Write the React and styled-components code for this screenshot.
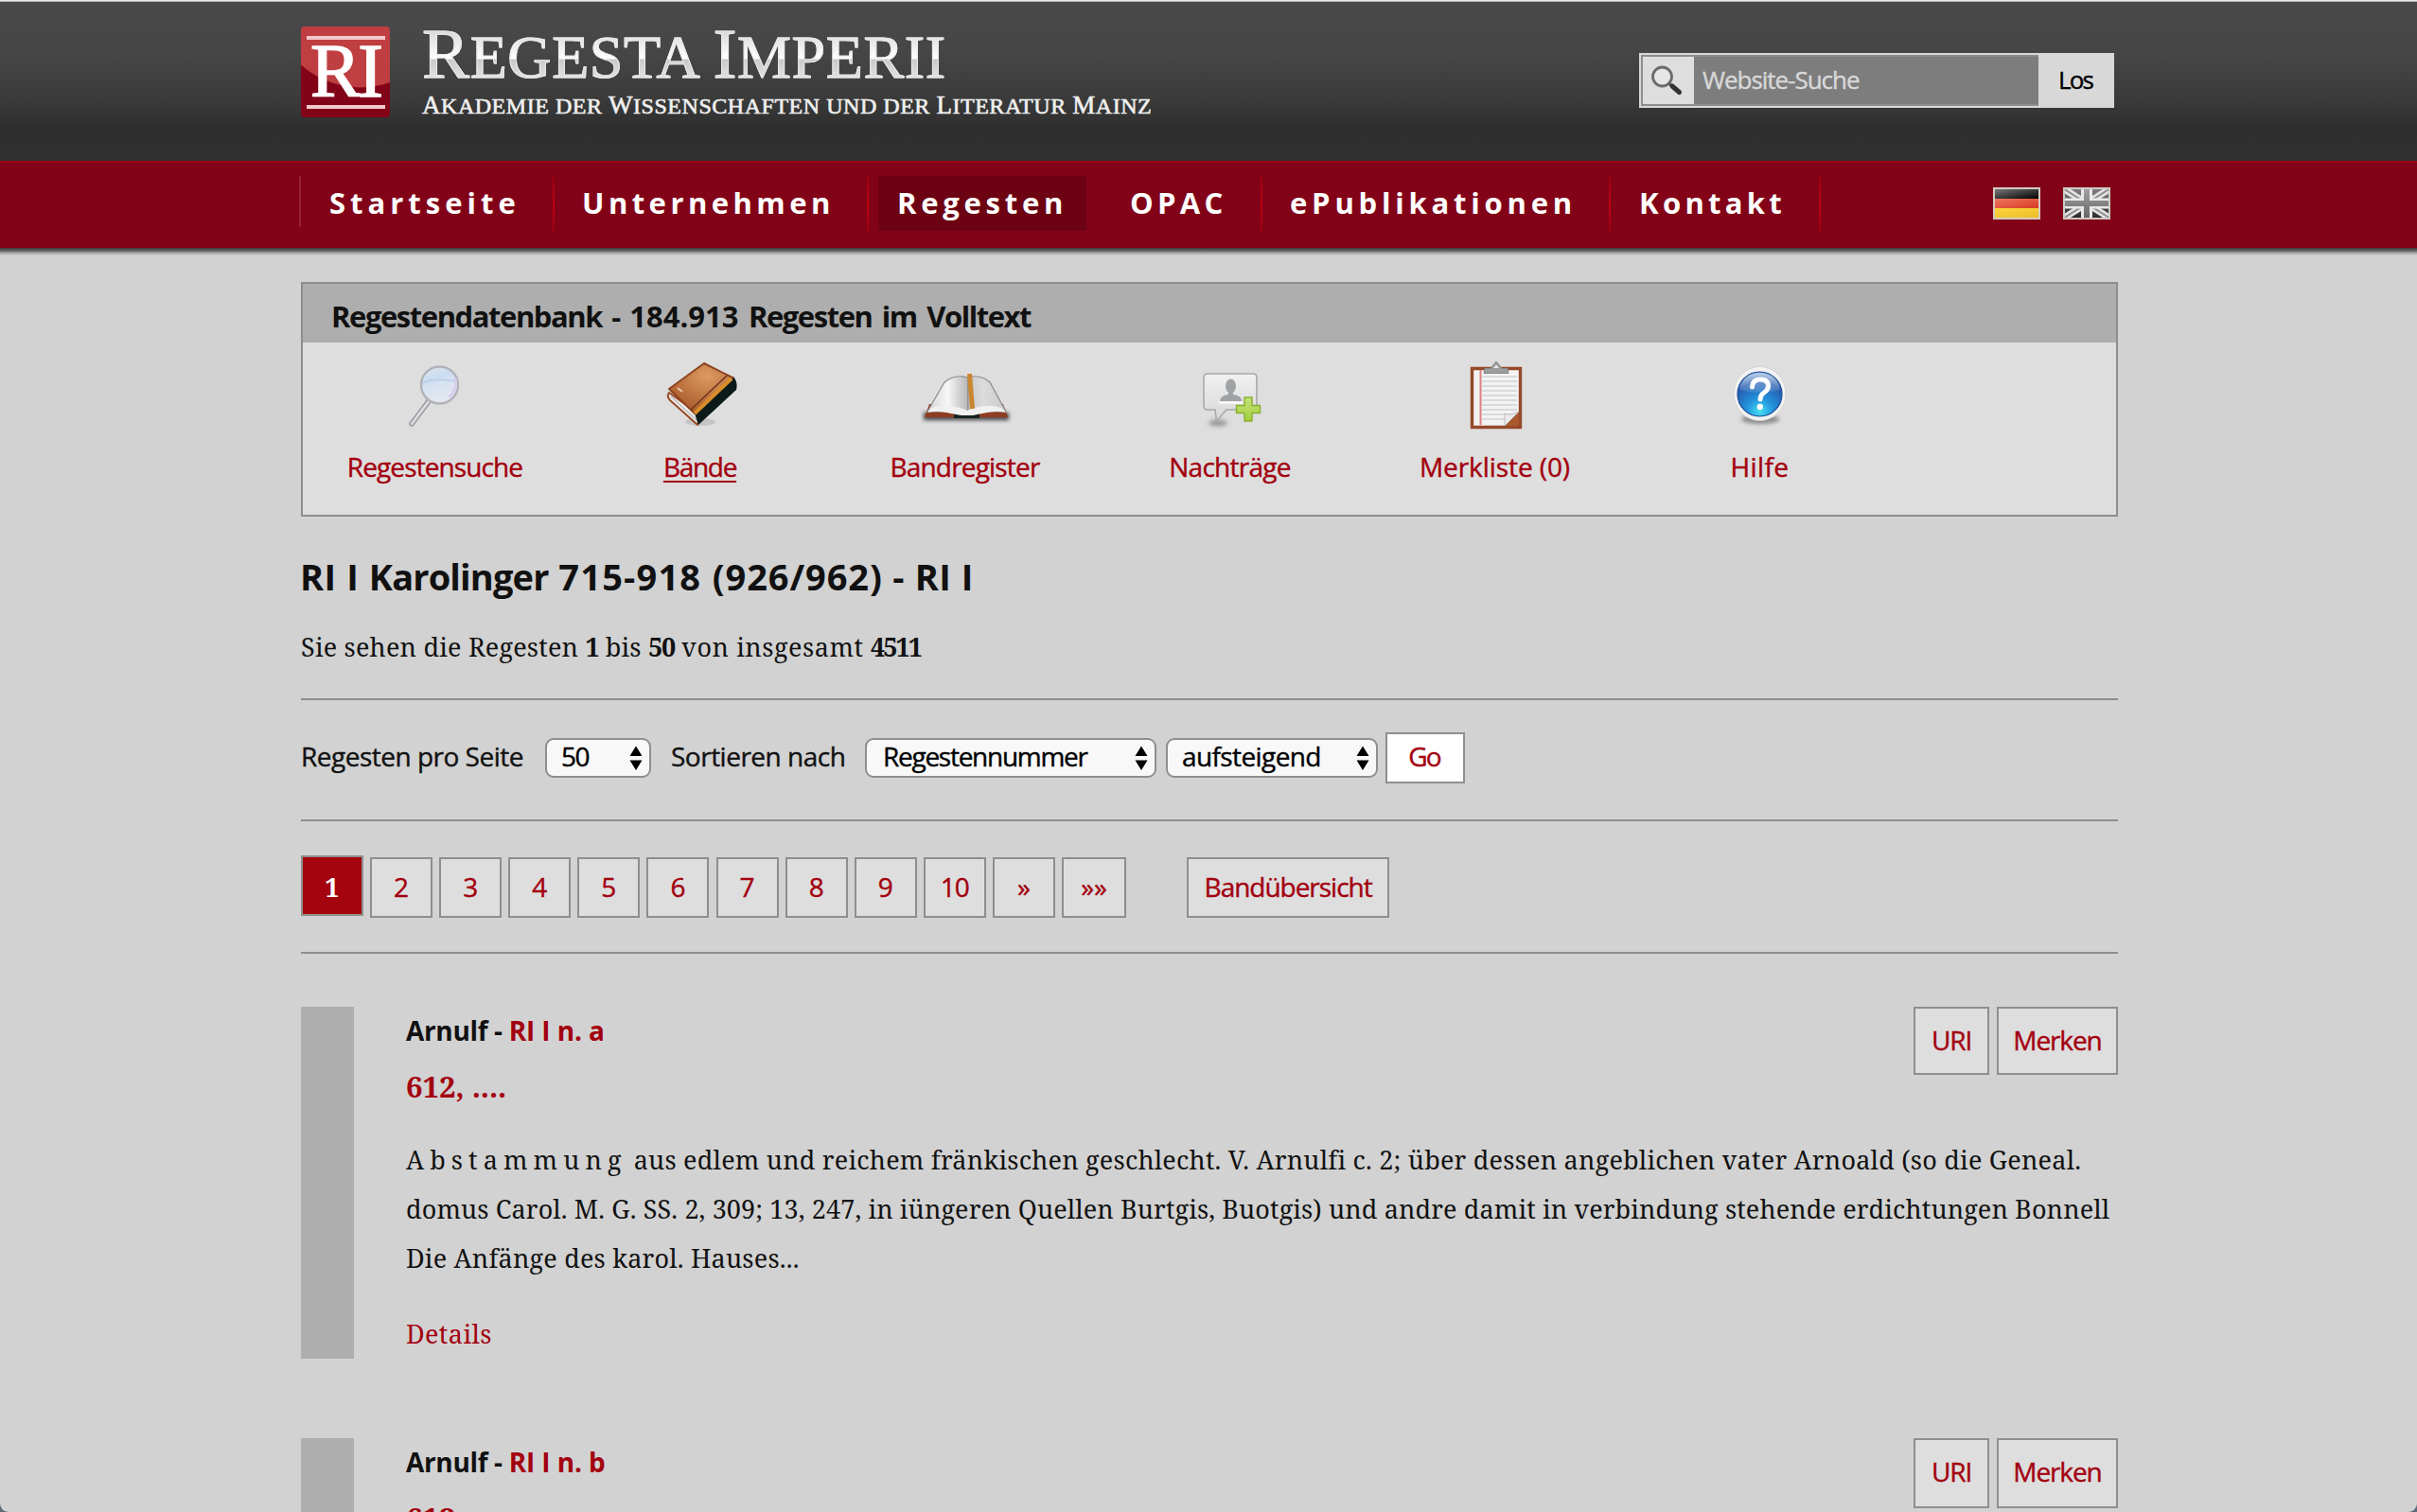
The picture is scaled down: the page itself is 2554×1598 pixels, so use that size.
import React from 'react';
import styled, { createGlobalStyle, css } from 'styled-components';

const sans = "'Open Sans', 'Noto Sans', sans-serif";
const slab = "'Noto Serif', 'DejaVu Serif Condensed', 'DejaVu Serif', serif";
const roman = "'Liberation Serif', 'Times New Roman', serif";

const c = {
  page: '#d2d2d2',
  ink: '#111',
  red: '#a3000f',
  navRed: '#820318',
  line: '#8e8e8e',
  bar: '#aeaeae',
  light: '#dedede',
};

const Global = createGlobalStyle`
  * { box-sizing: border-box; }
  html, body { margin: 0; padding: 0; background: #5f6b78; }
  body { font-family: ${sans}; color: ${c.ink}; }
  h1, h2, h3, p { margin: 0; }
  a { color: inherit; text-decoration: none; }
  svg { display: block; flex: none; }
`;

const sturdy = css`
  -webkit-text-stroke: 0.4px currentColor;
`;

const Page = styled.div`
  width: 2554px;
  height: 1598px;
  overflow: hidden;
  display: flex;
  flex-direction: column;
  background: ${c.page};
  border-radius: 0 0 9px 9px;
  white-space: nowrap;
`;

const Tracked = styled.span`
  letter-spacing: ${p => p.$ls}px;
`;

/* ---------- header ---------- */
const TopEdge = styled.div`
  height: 2px;
  flex: none;
  background: linear-gradient(#e9ecec 50%, #b3b7b7 50%);
`;
const Header = styled.header`
  height: 168px;
  flex: none;
  padding: 0 320px 0 318px;
  display: flex;
  align-items: flex-start;
  background: linear-gradient(#4a4949, #474646 32%, #3a3a3a 62%, #2e2e2e 80%, #303030);
`;
const Emblem = styled.div`
  width: 94px;
  height: 96px;
  margin-top: 26px;
  border-radius: 4px;
  display: flex;
  flex-direction: column;
  align-items: center;
  padding: 10px 0 0;
  background: radial-gradient(circle 96px at 63px -31px, #bf3e41 98.5%, ${c.navRed} 100%);
`;
const EmblemBar = styled.div`
  width: 83px;
  height: 4px;
  flex: none;
  background: #f1c9cb;
`;
const EmblemText = styled.div`
  height: 69px;
  font: 400 80px/67px ${roman};
  letter-spacing: -3px;
  color: #fff;
  -webkit-text-stroke: 1.5px #fff;
`;
const Brand = styled.div`
  margin: 25px 0 0 34px;
  font-family: ${roman};
  text-transform: uppercase;
`;
const BrandTitle = styled.div`
  height: 60px;
  font-size: 64px;
  line-height: 60px;
  letter-spacing: 0.6px;
  color: transparent;
  background: linear-gradient(#d8d8d8 8%, #ffffff 58%, #c9c9c9 60%, #e2e2e2 92%);
  -webkit-background-clip: text;
  background-clip: text;
  -webkit-text-stroke: 1px #e9e9e9;
`;
const Cap = styled.span`
  font-size: ${p => p.$size}px;
`;
const BrandSub = styled.div`
  margin-top: 9px;
  height: 30px;
  line-height: 30px;
  font-size: 24px;
  letter-spacing: 0.53px;
  color: #f0f0f0;
  -webkit-text-stroke: 0.6px #f0f0f0;
`;
const Search = styled.form`
  margin: 54px 0 0 auto;
  width: 502px;
  height: 58px;
  display: flex;
  padding: 2px 0 2px 2px;
  background: #d8d8d8;
  font-size: 26px;
  ${sturdy}
`;
const SearchField = styled.div`
  width: 420px;
  display: flex;
  border: 2px solid ${c.line};
  border-right: 0;
  background: #7d7d7d;
  color: #d8d8d8;
  line-height: 48px;
`;
const SearchIcon = styled.div`
  width: 54px;
  background: ${c.light};
`;
const Placeholder = styled.span`
  padding-left: 9px;
  letter-spacing: -1.03px;
`;
const SearchButton = styled.div`
  flex: 1;
  padding-left: 21px;
  line-height: 52px;
  letter-spacing: -1.8px;
  color: #000;
`;

/* ---------- navigation ---------- */
const Nav = styled.nav`
  height: 92px;
  flex: none;
  padding: 14px 324px 0 316px;
  display: flex;
  align-items: flex-start;
  border-top: 2px solid #a00610;
  background: ${c.navRed};
`;
const NavLine = styled.i`
  width: 2px;
  height: ${p => (p.$first ? 54 : 60)}px;
  background: ${p => (p.$first ? '#97222c' : 'linear-gradient(#9a0011, #c00010 50%, #9a0011)')};
`;
const NavItem = styled.a`
  width: ${p => p.$w}px;
  height: 58px;
  padding-left: ${p => p.$pad}px;
  font-size: 31px;
  font-weight: 700;
  line-height: 56px;
  letter-spacing: ${p => p.$ls}px;
  color: #fff;
  ${p => p.$active && css`
    margin-left: 10px;
    background: #6d0213;
  `}
`;
const Flags = styled.div`
  margin: 12px 0 0 auto;
  display: flex;
  gap: 24px;
`;
const NavShadow = styled.div`
  height: 8px;
  flex: none;
  background: linear-gradient(#363636, #6a6a6a 40%, #b4b4b4 75%, #cfcfcf);
`;

/* ---------- content ---------- */
const Content = styled.main`
  width: 1920px;
  margin: 28px 0 0 318px;
  display: flex;
  flex-direction: column;
`;
const Panel = styled.section`
  height: 248px;
  border: 2px solid ${c.line};
  background: ${c.light};
`;
const PanelTitle = styled.h2`
  height: 62px;
  padding: 6px 0 0 30px;
  background: ${c.bar};
  font-size: 31px;
  font-weight: 700;
  line-height: 56px;
  letter-spacing: -1.45px;
  word-spacing: 3.8px;
`;
const Tools = styled.div`
  display: flex;
`;
const Tool = styled.a`
  width: 280px;
  display: flex;
  flex-direction: column;
  align-items: center;
  gap: 11px;
  color: ${c.red};
  font-size: 28px;
  line-height: 40px;
  ${sturdy}
`;
const ToolLabel = styled.span`
  letter-spacing: ${p => p.$ls}px;
  margin-right: 1px;
  ${p => p.$active && css`
    text-decoration: underline;
    text-decoration-thickness: 2px;
    text-underline-offset: 4px;
  `}
`;
const Heading = styled.h1`
  margin: 38px 0 0 -1px;
  font-size: 38px;
  font-weight: 700;
  line-height: 50px;
  letter-spacing: 0.4px;
  word-spacing: 0.4px;
`;
const Summary = styled.p`
  margin-top: 30px;
  font: 400 27px/40px ${slab};
  letter-spacing: 0.2px;
`;
const Rule = styled.hr`
  width: 100%;
  height: 2px;
  border: 0;
  margin: ${p => p.$top}px 0 ${p => p.$bottom}px;
  background: ${c.line};
`;
const Controls = styled.div`
  height: 54px;
  display: flex;
  align-items: center;
  font-size: 28px;
  ${sturdy}
`;
const Label = styled.label`
  width: ${p => p.$w}px;
  padding-bottom: 4px;
  margin-left: ${p => p.$ml || 0}px;
  letter-spacing: -0.5px;
`;
const SelectBox = styled.div`
  width: ${p => p.$w}px;
  height: 42px;
  margin-left: ${p => p.$ml || 0}px;
  padding: 0 7px 0 ${p => p.$pad}px;
  display: flex;
  justify-content: space-between;
  border: 2px solid ${c.line};
  border-radius: 9px;
  background: #f8f8f8;
  color: #000;
  line-height: 34px;
  letter-spacing: ${p => p.$ls}px;
`;
const Go = styled.button`
  width: 84px;
  height: 54px;
  margin-left: 8px;
  padding: 0 2px 0 0;
  border: 2px solid ${c.line};
  background: #fff;
  color: ${c.red};
  font: 400 28px/46px ${sans};
  letter-spacing: -1.8px;
  display: flex;
  justify-content: center;
  ${sturdy}
`;
const Pager = styled.div`
  height: 66px;
  display: flex;
  align-items: flex-start;
  gap: 7.1px;
`;
const PageBox = styled.a`
  width: ${p => p.$w || 66}px;
  height: 64px;
  margin: 2px 0 0 ${p => p.$ml || 0}px;
  border: 2px solid ${c.line};
  background: ${c.light};
  color: ${c.red};
  font-size: 28px;
  line-height: 58px;
  text-align: center;
  letter-spacing: ${p => p.$ls || 0}px;
  ${sturdy}
  ${p => p.$active && css`
    margin-top: 0;
    background: #a3040e;
    color: #fff;
    font: 700 27px/64px ${slab};
    -webkit-text-stroke: 0;
  `}
`;
const Entries = styled.div`
  display: flex;
  flex-direction: column;
  gap: 84px;
`;
const Entry = styled.article`
  height: 372px;
  display: flex;
  gap: 55px;
`;
const EntryBar = styled.div`
  width: 56px;
  background: ${c.bar};
`;
const EntryBody = styled.div`
  flex: 1;
`;
const EntryTop = styled.div`
  height: 106px;
  display: flex;
  justify-content: space-between;
  align-items: flex-start;
`;
const EntryHead = styled.h3`
  margin-top: 5px;
  font-size: 28px;
  font-weight: 700;
  line-height: 40px;
  letter-spacing: -0.35px;
  a { color: ${c.red}; letter-spacing: -0.1px; }
`;
const EntryDate = styled.h3`
  margin: 17px 0 0;
  font: 700 31px/44px ${slab};
  color: ${c.red};
`;
const Actions = styled.div`
  display: flex;
  gap: 8px;
`;
const Action = styled.a`
  width: ${p => p.$w}px;
  height: ${p => p.$h || 72}px;
  border: 2px solid ${c.line};
  background: ${c.light};
  color: ${c.red};
  font-size: 28px;
  line-height: 66px;
  text-align: center;
  letter-spacing: -1.1px;
  ${sturdy}
`;
const Abstract = styled.p`
  margin-top: 30px;
  font: 400 27px/52px ${slab};
`;
const Details = styled.a`
  display: block;
  margin-top: 28px;
  color: ${c.red};
  font: 400 27px/52px ${slab};
  letter-spacing: 0.4px;
`;

/* ---------- drawings ---------- */
const Magnifier = () => (
  <svg width="54" height="50" viewBox="0 0 54 50" fill="none">
    <circle cx="20.5" cy="21" r="10" fill="#e6e6e6" stroke="#6b6b6b" strokeWidth="2.8" />
    <path d="M28 28.5l3 3" stroke="#555" strokeWidth="3" />
    <path d="M31 31l7.5 6.5" stroke="#333" strokeWidth="5" strokeLinecap="round" />
  </svg>
);

const FlagDe = () => (
  <svg width="50" height="34" viewBox="0 0 50 34">
    <defs>
      <linearGradient id="deK" x1="0" y1="0" x2="1" y2="1"><stop offset="0" stopColor="#777" /><stop offset="1" stopColor="#000" /></linearGradient>
      <linearGradient id="deR" x1="0" y1="0" x2="1" y2="1"><stop offset="0" stopColor="#ee7560" /><stop offset="1" stopColor="#d83a22" /></linearGradient>
      <linearGradient id="deG" x1="0" y1="0" x2="1" y2="1"><stop offset="0" stopColor="#fbd53c" /><stop offset="1" stopColor="#edbe26" /></linearGradient>
    </defs>
    <path fill="#d3cbc4" d="M0 0h50v34H0z" />
    <path fill="url(#deK)" d="M2 2h46v10H2z" />
    <path fill="url(#deR)" d="M2 12h46v10H2z" />
    <path fill="url(#deG)" d="M2 22h46v10H2z" />
  </svg>
);

const FlagUk = () => (
  <svg width="50" height="34" viewBox="0 0 50 34">
    <defs>
      <clipPath id="ukClip"><path d="M2 2h46v30H2z" /></clipPath>
      <linearGradient id="ukB" x1="0" y1="0" x2="0" y2="1"><stop offset="0" stopColor="#808080" /><stop offset="1" stopColor="#2c2c2c" /></linearGradient>
      <linearGradient id="ukC" x1="0" y1="0" x2="0" y2="1"><stop offset="0" stopColor="#a2a2a2" /><stop offset="1" stopColor="#666" /></linearGradient>
    </defs>
    <path fill="#cfcac6" d="M0 0h50v34H0z" />
    <g clipPath="url(#ukClip)">
      <path fill="url(#ukB)" d="M2 2h46v30H2z" />
      <path stroke="#e4e4e4" strokeWidth="7" d="M0 1l50 32M50 1L0 33" />
      <path stroke="#909090" strokeWidth="2" d="M0 1l50 32M50 1L0 33" />
      <path fill="#e8e8e8" d="M19 2h12v30H19zM2 11.500h46v11H2z" />
      <path fill="url(#ukC)" d="M22 2h6v30h-6zM2 14h46v6H2z" />
    </g>
  </svg>
);

const IconSearch = () => (
  <svg width="120" height="100" viewBox="0 0 120 100">
    <defs>
      <linearGradient id="lens" x1="0" y1="0" x2="0.4" y2="1">
        <stop offset="0" stopColor="#e3e9f0" /><stop offset="0.4" stopColor="#c9dcf0" /><stop offset="0.5" stopColor="#d3e1f1" /><stop offset="1" stopColor="#e6e8ee" />
      </linearGradient>
    </defs>
    <path d="M53 62L35 86" stroke="#9a9ca0" strokeWidth="5.5" strokeLinecap="round" />
    <path d="M53 62L35 86" stroke="#dfe1e4" strokeWidth="2.4" strokeLinecap="round" />
    <circle cx="64.5" cy="45" r="19.5" fill="url(#lens)" stroke="#b0b3b9" strokeWidth="2.4" />
    <path d="M47 42q17-5 35-1" stroke="#b7cde6" strokeWidth="1.4" fill="none" />
    <path d="M81 38q3 12-7 20" stroke="#d6cfec" strokeWidth="3" fill="none" />
  </svg>
);

const IconBook = () => (
  <svg width="120" height="100" viewBox="0 0 120 100">
    <defs>
      <radialGradient id="cover" cx="0.6" cy="0.25" r="0.75"><stop offset="0" stopColor="#dc9a60" /><stop offset="1" stopColor="#a9592b" /></radialGradient>
    </defs>
    <ellipse cx="60" cy="84" rx="16" ry="4" fill="#bbb" opacity="0.7" />
    <path d="M27 53q-3 4 1 8l29 26 3-10z" fill="#ececec" stroke="#9a4a25" strokeWidth="2" strokeLinejoin="round" />
    <path d="M29 57l28 26" stroke="#bdbdbd" strokeWidth="1.5" />
    <path d="M95 36q5 6 3 14L58 87q-2-6-4-12z" fill="#0c1a18" />
    <path d="M64 22l30 15-40 38-27-26z" fill="url(#cover)" stroke="#8e4321" strokeWidth="2" strokeLinejoin="round" />
    <path d="M88 35L50 71" stroke="#6d3318" strokeWidth="1.5" />
    <path d="M93 38L54 75" stroke="#d88d2a" strokeWidth="4" />
    <path d="M36 48l5 4" stroke="#e9c7a8" strokeWidth="2" />
  </svg>
);

const IconOpenBook = () => (
  <svg width="120" height="100" viewBox="0 0 120 100">
    <defs>
      <linearGradient id="pgL" x1="0" y1="0" x2="1" y2="0"><stop offset="0" stopColor="#d5d5d5" /><stop offset="0.5" stopColor="#f6f6f6" /><stop offset="1" stopColor="#b5b5b5" /></linearGradient>
      <linearGradient id="pgR" x1="0" y1="0" x2="1" y2="0"><stop offset="0" stopColor="#c6c6c6" /><stop offset="0.4" stopColor="#dcdcdc" /><stop offset="1" stopColor="#c9c9c9" /></linearGradient>
      <filter id="soft" x="-20%" y="-100%" width="140%" height="300%"><feGaussianBlur stdDeviation="2" /></filter>
    </defs>
    <path d="M16 74h90v8H16z" fill="#444" filter="url(#soft)" />
    <path d="M17 79l5-14h78l5 14z" fill="#8f3c20" />
    <path d="M48 75h27v5H48z" fill="#16221f" />
    <path d="M20 73L38 42q11-9 25-5v36z" fill="url(#pgL)" stroke="#8d8d8d" strokeWidth="1.200" />
    <path d="M103 73L86 42q-11-9-23-5v36z" fill="url(#pgR)" stroke="#8d8d8d" strokeWidth="1.200" />
    <path d="M20 74q4-7 16-7 16 0 26 5 10-5 25-5 12 0 16 7-9-2-20 0-11 2-15 3H56q-6-1-16-3t-20 0z" fill="#f1f1f1" />
    <path d="M64.500 33l3 37" stroke="#c9862f" strokeWidth="5" />
  </svg>
);

const IconNote = () => (
  <svg width="120" height="100" viewBox="0 0 120 100">
    <defs>
      <linearGradient id="bub" x1="0" y1="0" x2="0" y2="1"><stop offset="0" stopColor="#f1f1f1" /><stop offset="1" stopColor="#d6d7d8" /></linearGradient>
      <linearGradient id="pls" x1="0" y1="0" x2="0" y2="1"><stop offset="0" stopColor="#c5e07a" /><stop offset="1" stopColor="#a4cf3c" /></linearGradient>
      <filter id="soft2" x="-50%" y="-100%" width="200%" height="300%"><feGaussianBlur stdDeviation="2" /></filter>
    </defs>
    <ellipse cx="47" cy="85" rx="10" ry="3.500" fill="#999" filter="url(#soft2)" />
    <path d="M36 33h48q4 0 4 4v30q0 4-4 4H56L45.500 83 44 71h-8q-4 0-4-4V37q0-4 4-4z" fill="url(#bub)" stroke="#a9a9a9" strokeWidth="1.6" />
    <ellipse cx="60.500" cy="46" rx="5.500" ry="7.500" fill="#a0a3a6" />
    <path d="M58 50h5v5q9 1 9.500 7H49q.5-6 9-7z" fill="#a0a3a6" />
    <path d="M48 63.500h25" stroke="#fff" strokeWidth="2" />
    <path d="M75 58h8v8.500h8.500v8H83V83h-8v-8.500h-8.500v-8H75z" fill="url(#pls)" stroke="#86b02c" strokeWidth="1.400" strokeLinejoin="round" />
  </svg>
);

const IconClipboard = () => (
  <svg width="120" height="100" viewBox="0 0 120 100">
    <path d="M35.500 27.500h51v62h-51z" fill="#f3f3f3" stroke="#96492a" strokeWidth="3.400" />
    {[36, 41, 46, 51, 56, 61, 66, 71, 76, 81].map(y => (
      <path key={y} d={`M46 ${y}h37`} stroke="#d9dadb" strokeWidth="2.200" />
    ))}
    <path d="M44.500 29v58" stroke="#dd7f80" strokeWidth="2" />
    <path d="M85 73v15H70z" fill="#a9592b" />
    <path d="M70 88V75q5 3 15-2z" fill="#ebebeb" stroke="#bcbcbc" strokeWidth="1" />
    <path d="M48 32.500l1-5h6l6-7.500 6 7.500h6l1 5z" fill="#9b9d9f" stroke="#85878a" strokeWidth="1" />
    <path d="M58 27l3-3.500 3 3.500z" fill="#e8e8e8" />
  </svg>
);

const IconHelp = () => (
  <svg width="120" height="100" viewBox="0 0 120 100">
    <defs>
      <radialGradient id="orb" cx="0.5" cy="0.9" r="0.85"><stop offset="0" stopColor="#45e0f2" /><stop offset="0.35" stopColor="#2394dc" /><stop offset="0.8" stopColor="#2459ad" /><stop offset="1" stopColor="#5c8dcb" /></radialGradient>
      <linearGradient id="gloss" x1="0" y1="0" x2="0" y2="1"><stop offset="0" stopColor="#fff" stopOpacity="0.55" /><stop offset="1" stopColor="#fff" stopOpacity="0.1" /></linearGradient>
      <filter id="soft3" x="-50%" y="-100%" width="200%" height="300%"><feGaussianBlur stdDeviation="2" /></filter>
    </defs>
    <ellipse cx="60" cy="81" rx="20" ry="5" fill="#888" filter="url(#soft3)" />
    <ellipse cx="59.500" cy="54" rx="27.500" ry="28.500" fill="#f3f3f3" stroke="#d6d6d6" strokeWidth="1" />
    <circle cx="59.500" cy="54.500" r="23.500" fill="url(#orb)" stroke="#1e4c98" strokeWidth="1.200" />
    <path d="M38 50q4-18 21.500-18T81 50q-20 6-43 0z" fill="url(#gloss)" />
    <path d="M51.500 47q.5-8 8.500-8 8.500 0 8.500 7 0 4-4.500 7-4 2.500-4 7" fill="none" stroke="#fff" strokeWidth="5" strokeLinecap="round" />
    <circle cx="59.800" cy="68" r="3.200" fill="#fff" />
  </svg>
);

const Arrows = () => (
  <svg width="14" height="38" viewBox="0 0 14 38">
    <path d="M7 6.500l6.500 10.500h-13zM7 32l6.500-10.500h-13z" fill="#000" />
  </svg>
);

/* ---------- data ---------- */
const nav = [
  { t: 'Startseite', w: 266, pad: 30, ls: 5 },
  { t: 'Unternehmen', w: 330, pad: 29, ls: 4.45 },
  { t: 'Regesten', w: 220, pad: 20, ls: 4.74, active: true, open: true },
  { t: 'OPAC', w: 184, pad: 46, ls: 4.3 },
  { t: 'ePublikationen', w: 366, pad: 29, ls: 4.8 },
  { t: 'Kontakt', w: 220, pad: 30, ls: 4.3 },
];
const tools = [
  { t: 'Regestensuche', ls: -0.9, Icon: IconSearch },
  { t: 'Bände', ls: -1.3, Icon: IconBook, active: true },
  { t: 'Bandregister', ls: -0.82, Icon: IconOpenBook },
  { t: 'Nachträge', ls: -0.74, Icon: IconNote },
  { t: 'Merkliste (0)', ls: -0.07, Icon: IconClipboard },
  { t: 'Hilfe', ls: 0.4, Icon: IconHelp },
];
const pages = ['2', '3', '4', '5', '6', '7', '8', '9', '10', '»'];

function EntryItem({ id, date, actionHeight, children }) {
  return (
    <Entry>
      <EntryBar />
      <EntryBody>
        <EntryTop>
          <div>
            <EntryHead>Arnulf - <a>RI I n. {id}</a></EntryHead>
            <EntryDate>{date}</EntryDate>
          </div>
          <Actions>
            <Action $w={80} $h={actionHeight}>URI</Action>
            <Action $w={128} $h={actionHeight}>Merken</Action>
          </Actions>
        </EntryTop>
        {children}
      </EntryBody>
    </Entry>
  );
}

export default function App() {
  return (
    <>
      <Global />
      <Page>
        <TopEdge />
        <Header>
          <Emblem>
            <EmblemBar />
            <EmblemText>RI</EmblemText>
            <EmblemBar />
          </Emblem>
          <Brand>
            <BrandTitle><Cap $size={75}>R</Cap>egesta <Cap $size={75}>I</Cap>mperii</BrandTitle>
            <BrandSub>
              <Cap $size={27}>A</Cap>kademie der <Cap $size={27}>W</Cap>issenschaften und der <Cap $size={27}>L</Cap>iteratur <Cap $size={27}>M</Cap>ainz
            </BrandSub>
          </Brand>
          <Search>
            <SearchField>
              <SearchIcon><Magnifier /></SearchIcon>
              <Placeholder>Website-Suche</Placeholder>
            </SearchField>
            <SearchButton>Los</SearchButton>
          </Search>
        </Header>
        <Nav>
          <NavLine $first />
          {nav.map(n => (
            <React.Fragment key={n.t}>
              <NavItem $w={n.w} $pad={n.pad} $ls={n.ls} $active={n.active}>{n.t}</NavItem>
              {!n.open && <NavLine />}
            </React.Fragment>
          ))}
          <Flags><FlagDe /><FlagUk /></Flags>
        </Nav>
        <NavShadow />
        <Content>
          <Panel>
            <PanelTitle>Regestendatenbank - <Tracked $ls={0}>184.913</Tracked> Regesten im Volltext</PanelTitle>
            <Tools>
              {tools.map(({ t, ls, Icon, active }) => (
                <Tool key={t}><Icon /><ToolLabel $ls={ls} $active={active}>{t}</ToolLabel></Tool>
              ))}
            </Tools>
          </Panel>
          <Heading>
            RI I <Tracked $ls={-0.85}>Karolinger</Tracked> <Tracked $ls={1.2}>715-918 </Tracked><Tracked $ls={0.9}>(926/962)</Tracked> - RI I
          </Heading>
          <Summary>
            Sie sehen die Regesten <b><Tracked $ls={-1.2}>1</Tracked></b> bis <b><Tracked $ls={-1.2}>50</Tracked></b> <Tracked $ls={0.55}>von insgesamt</Tracked> <b><Tracked $ls={-2}>4511</Tracked></b>
          </Summary>
          <Rule $top={34} $bottom={34} />
          <Controls>
            <Label $w={258}>Regesten pro Seite</Label>
            <SelectBox $w={112} $pad={15} $ls={-1.5}>50<Arrows /></SelectBox>
            <Label $ml={21} $w={205}>Sortieren nach</Label>
            <SelectBox $w={308} $pad={17} $ls={-1.27}>Regestennummer<Arrows /></SelectBox>
            <SelectBox $w={224} $ml={10} $pad={15} $ls={-0.6}>aufsteigend<Arrows /></SelectBox>
            <Go>Go</Go>
          </Controls>
          <Rule $top={38} $bottom={36} />
          <Pager>
            <PageBox $active>1</PageBox>
            {pages.map(p => <PageBox key={p} $ls={p === '10' ? -1 : 0}>{p}</PageBox>)}
            <PageBox $w={68}>»»</PageBox>
            <PageBox $w={214} $ml={57} $ls={-1.03}>Bandübersicht</PageBox>
          </Pager>
          <Rule $top={36} $bottom={56} />
          <Entries>
            <EntryItem id="a" date="612, ....">
              <Abstract>
                <Tracked $ls={6.1}>Abstammung</Tracked>{' '}
                <Tracked $ls={0.22}>aus edlem und reichem fränkischen geschlecht. V. Arnulfi c. 2; über dessen angeblichen vater Arnoald (so die Geneal.</Tracked><br />
                <Tracked $ls={0.125}>domus Carol. M. G. SS. 2, 309; 13, 247, in iüngeren Quellen Burtgis, Buotgis) und andre damit in verbindung stehende erdichtungen Bonnell</Tracked><br />
                <Tracked $ls={0.2}>Die Anfänge des karol. Hauses...</Tracked>
              </Abstract>
              <Details>Details</Details>
            </EntryItem>
            <EntryItem id="b" date="612, ...." actionHeight={74} />
          </Entries>
        </Content>
      </Page>
    </>
  );
}
